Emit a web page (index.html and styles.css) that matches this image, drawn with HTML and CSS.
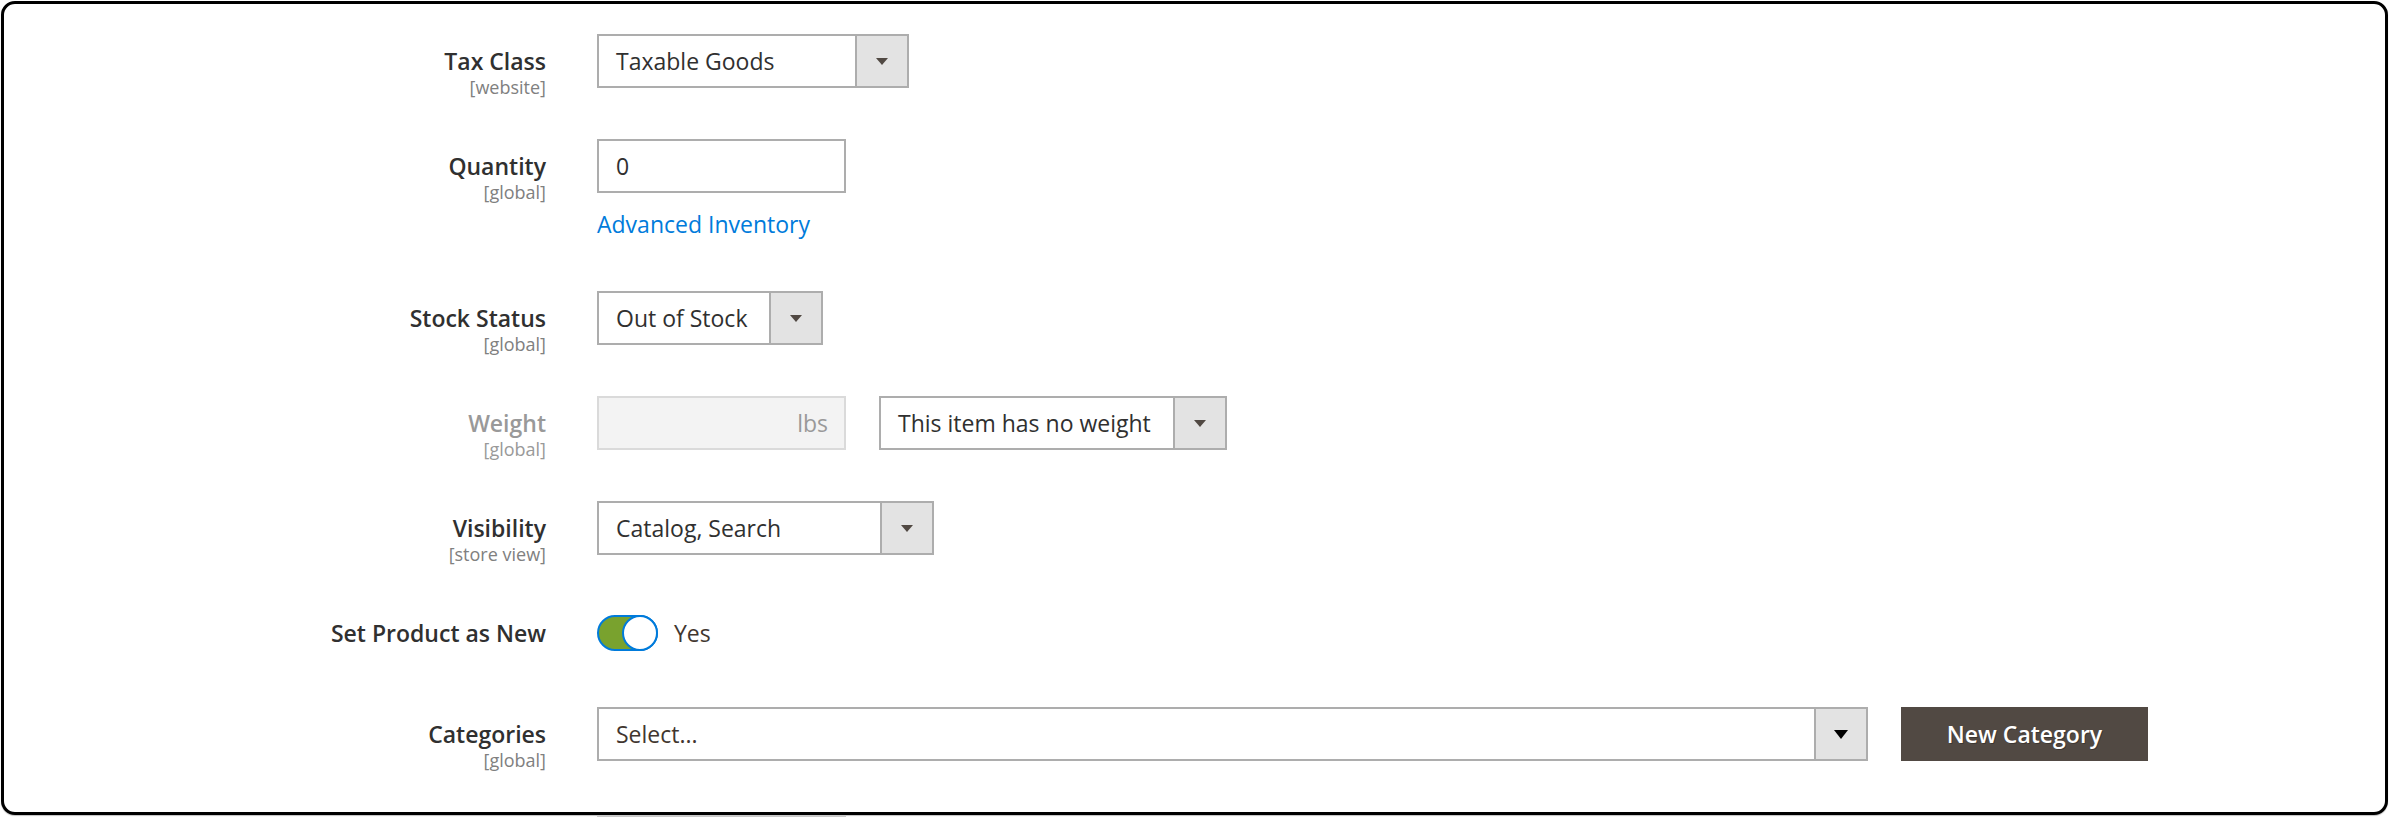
FILE: index.html
```html
<!DOCTYPE html>
<html lang="en">
<head>
<meta charset="utf-8">
<title>Product form</title>
<link rel="stylesheet" href="styles.css">
</head>
<body>
<div class="frame">
  <form class="form">
    <div class="field">
      <div class="field-label"><span class="label-text">Tax Class</span><span class="scope">[website]</span></div>
      <div class="field-control">
        <div class="select select--tax"><span class="select-value">Taxable Goods</span><span class="select-btn"><span class="caret"></span></span></div>
      </div>
    </div>

    <div class="field">
      <div class="field-label"><span class="label-text">Quantity</span><span class="scope">[global]</span></div>
      <div class="field-control field-control--stack">
        <div class="input input--qty"><span class="input-value">0</span></div>
        <a class="link" href="#">Advanced Inventory</a>
      </div>
    </div>

    <div class="field">
      <div class="field-label"><span class="label-text">Stock Status</span><span class="scope">[global]</span></div>
      <div class="field-control">
        <div class="select select--stock"><span class="select-value">Out of Stock</span><span class="select-btn"><span class="caret"></span></span></div>
      </div>
    </div>

    <div class="field field--disabled">
      <div class="field-label"><span class="label-text">Weight</span><span class="scope">[global]</span></div>
      <div class="field-control field-control--row">
        <div class="input input--qty input--disabled"><span class="input-addon">lbs</span></div>
        <div class="select select--weight"><span class="select-value">This item has no weight</span><span class="select-btn"><span class="caret"></span></span></div>
      </div>
    </div>

    <div class="field">
      <div class="field-label"><span class="label-text">Visibility</span><span class="scope">[store view]</span></div>
      <div class="field-control">
        <div class="select select--visibility"><span class="select-value">Catalog, Search</span><span class="select-btn"><span class="caret"></span></span></div>
      </div>
    </div>

    <div class="field field--toggle">
      <div class="field-label"><span class="label-text">Set Product as New</span></div>
      <div class="field-control field-control--toggle">
        <span class="toggle"><span class="toggle-knob"></span></span>
        <span class="toggle-text">Yes</span>
      </div>
    </div>

    <div class="field field--last">
      <div class="field-label"><span class="label-text">Categories</span><span class="scope">[global]</span></div>
      <div class="field-control field-control--row">
        <div class="select select--categories"><span class="select-value select-value--placeholder">Select...</span><span class="select-btn"><span class="caret caret--dark"></span></span></div>
        <button type="button" class="btn-secondary">New Category</button>
      </div>
    </div>
  </form>
</div>
<div class="peek"></div>
</body>
</html>
```

FILE: styles.css
```css
* { box-sizing: border-box; }

html, body {
  margin: 0;
  padding: 0;
  background: #ffffff;
}

body {
  font-family: "Open Sans", "Noto Sans", "Liberation Sans", sans-serif;
  color: #303030;
  width: 2389px;
  height: 817px;
  overflow: hidden;
}

.frame {
  margin: 1px 1px 0 1px;
  height: 814px;
  border: 3px solid #000000;
  border-radius: 14px;
  background: #ffffff;
  box-shadow: 0 1px 1px rgba(0, 0, 0, 0.25);
}

.form {
  padding-top: 30px;
}

.field {
  display: grid;
  grid-template-columns: 542px 1fr;
  column-gap: 51px;
  margin-bottom: 51px;
}

.field--last { margin-bottom: 0; }

.field-label {
  display: flex;
  flex-direction: column;
  align-items: flex-end;
  text-align: right;
  padding-top: 11px;
  height: 54px;
}

.field--toggle .field-label { height: 50px; }

.label-text {
  font-size: 23px;
  font-weight: 600;
  line-height: 32px;
  color: #303030;
  white-space: nowrap;
}

.scope {
  font-size: 18px;
  line-height: 21px;
  color: #808080;
  white-space: nowrap;
}

.field--disabled .label-text,
.field--disabled .scope {
  color: #999999;
}

.field-control {
  display: flex;
  align-items: flex-start;
}

.field-control--stack {
  flex-direction: column;
}

.field-control--row {
  flex-direction: row;
  gap: 33px;
}

/* select */
.select {
  display: flex;
  align-items: stretch;
  height: 54px;
  border: 2px solid #adadad;
  background: #ffffff;
}

.select-value {
  flex: 1;
  display: flex;
  align-items: center;
  padding-left: 17px;
  font-size: 23px;
  line-height: 32px;
  color: #303030;
  white-space: nowrap;
}

.select-value--placeholder { color: #41362f; }

.select-btn {
  width: 52px;
  flex: none;
  background: #e3e3e3;
  border-left: 2px solid #adadad;
  display: flex;
  align-items: center;
  justify-content: center;
}

.caret {
  width: 0;
  height: 0;
  border-left: 6px solid transparent;
  border-right: 6px solid transparent;
  border-top: 7px solid #514943;
}

.caret--dark {
  border-left-width: 7px;
  border-right-width: 7px;
  border-top: 9px solid #000000;
}

.select--tax { width: 312px; }
.select--stock { width: 226px; }
.select--weight { width: 348px; }
.select--visibility { width: 337px; }
.select--categories { width: 1271px; }

/* input */
.input {
  height: 54px;
  border: 2px solid #adadad;
  background: #ffffff;
  display: flex;
  align-items: center;
  padding: 0 16px 0 17px;
  font-size: 23px;
  line-height: 32px;
}

.input--qty { width: 249px; }

.input--disabled {
  background: #f3f3f3;
  border-color: #dadada;
  justify-content: flex-end;
}

.input-value { color: #303030; }
.input-addon { color: #999999; }

.link {
  margin-top: 15px;
  font-size: 23px;
  line-height: 32px;
  color: #007bdb;
  text-decoration: none;
}

/* toggle */
.field-control--toggle {
  align-items: center;
  height: 36px;
  margin-top: 9px;
  margin-bottom: 5px;
}

.toggle {
  position: relative;
  width: 61px;
  height: 36px;
  border-radius: 18px;
  background: #79a22e;
  border: 2px solid #007bdb;
  flex: none;
}

.toggle-knob {
  position: absolute;
  top: -2px;
  right: -2px;
  width: 36px;
  height: 36px;
  border-radius: 50%;
  background: #ffffff;
  border: 2px solid #007bdb;
}

.toggle-text {
  margin-left: 16px;
  font-size: 23px;
  line-height: 32px;
  color: #41362f;
}

/* button */
.btn-secondary {
  height: 54px;
  width: 247px;
  border: 0;
  background: #514943;
  color: #ffffff;
  font-family: "Open Sans", "Noto Sans", "Liberation Sans", sans-serif;
  font-size: 23px;
  font-weight: 600;
  text-shadow: 1px 1px 0 rgba(0, 0, 0, 0.25);
  padding: 0;
}

.peek {
  margin-left: 597px;
  width: 249px;
  height: 2px;
  background: #c8c8c8;
}
```
